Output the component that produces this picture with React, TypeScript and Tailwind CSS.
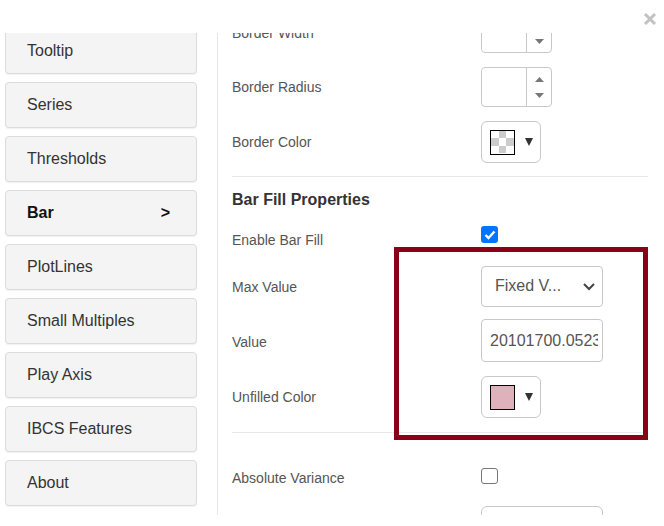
import React from "react";

const navItems = [
  "Tooltip",
  "Series",
  "Thresholds",
  "Bar",
  "PlotLines",
  "Small Multiples",
  "Play Axis",
  "IBCS Features",
  "About",
];

const NavButton = ({ label, active }: { label: string; active?: boolean }) => (
  <div className="flex h-[46px] w-[192px] shrink-0 items-center justify-between rounded-[4px] border border-[#dcdcdc] bg-[#f4f4f4] pl-[21px] pr-[26px] text-[16px] text-[#333] shadow-[0_1px_1px_rgba(0,0,0,0.06)]">
    <span className={active ? "font-bold text-[#111]" : ""}>{label}</span>
    {active && <span className="font-bold text-[#111]">&gt;</span>}
  </div>
);

const Spinner = ({ up = true }: { up?: boolean }) => (
  <div className="flex h-[40px] w-[71px] rounded-[4px] border border-[#c8c8c8] bg-white">
    <div className="flex-1 border-r border-[#c8c8c8]" />
    <div className="flex w-[24px] flex-col items-center justify-center gap-[11px]">
      <svg width="9" height="5" viewBox="0 0 9 5" className={up ? "" : "invisible"}>
        <path d="M0 5 L4.5 0 L9 5 Z" fill="#777" />
      </svg>
      <svg width="9" height="5" viewBox="0 0 9 5">
        <path d="M0 0 L4.5 5 L9 0 Z" fill="#777" />
      </svg>
    </div>
  </div>
);

const ColorPicker = ({ color }: { color?: string }) => (
  <div className="flex h-[42px] w-[60px] items-center rounded-[6px] border border-[#c8c8c8] bg-white pl-[8px]">
    {color ? (
      <div className="h-[25px] w-[25px] border border-black" style={{ background: color }} />
    ) : (
      <div className="grid h-[25px] w-[25px] grid-cols-3 grid-rows-3 border border-black">
        {[0, 1, 0, 1, 0, 1, 0, 1, 0].map((g, i) => (
          <div key={i} className={g ? "bg-[#cccccc]" : "bg-white"} />
        ))}
      </div>
    )}
    <svg width="8" height="8" viewBox="0 0 8 8" className="ml-[10px]">
      <path d="M0 0 L8 0 L4 8 Z" fill="#333" />
    </svg>
  </div>
);

const Row = ({
  label,
  h,
  children,
}: {
  label: string;
  h: string;
  children?: React.ReactNode;
}) => (
  <div className={`flex items-center ${h}`}>
    <div className="w-[249px] text-[14px] text-[#555]">{label}</div>
    {children}
  </div>
);

export default function App() {
  return (
    <div
      className="relative h-[526px] w-[664px] overflow-hidden bg-white"
      style={{ fontFamily: '"Liberation Sans", Arial, sans-serif' }}
    >
      {/* close */}
      <svg width="14" height="14" viewBox="0 0 14 14" className="absolute left-[643px] top-[12px]">
        <path d="M2 2 L12 12 M12 2 L2 12" stroke="#c2c2c2" strokeWidth="3" />
      </svg>

      <div className="mt-[33px] flex h-[482px]">
        {/* left nav */}
        <div className="w-[218px] shrink-0 overflow-hidden border-r border-[#e6e6e6]">
          <div className="-mt-[5px] flex flex-col gap-[8px] pl-[5px]">
            {navItems.map((n) => (
              <NavButton key={n} label={n} active={n === "Bar"} />
            ))}
          </div>
        </div>

        {/* right panel */}
        <div className="relative flex-1 overflow-hidden pl-[14px] pr-[16px]">
          <div className="-mt-[27px] flex flex-col">
            <Row label="Border Width" h="h-[54px]">
              <Spinner up={false} />
            </Row>
            <Row label="Border Radius" h="h-[54px]">
              <Spinner />
            </Row>
            <Row label="Border Color" h="h-[56px]">
              <ColorPicker />
            </Row>
            <div className="mt-[6px] h-px bg-[#e8e8e8]" />
            <div className="flex h-[44px] items-center pt-[2px] text-[16px] font-bold text-[#333]">
              Bar Fill Properties
            </div>
            <div className="flex h-[39px] items-start">
              <div className="mt-[9px] w-[249px] text-[14px] text-[#555]">Enable Bar Fill</div>
              <div className="mt-[5px] flex h-[17px] w-[17px] items-center justify-center rounded-[3px] bg-[#0075ff]">
                <svg width="12" height="10" viewBox="0 0 12 10">
                  <path d="M1.5 5 L4.5 8 L10.5 1.5" stroke="white" strokeWidth="2.4" fill="none" />
                </svg>
              </div>
            </div>
            <Row label="Max Value" h="h-[54px]">
              <div className="-mt-[2px] flex h-[41px] w-[122px] items-center justify-between rounded-[4px] border border-[#c8c8c8] bg-white pl-[13px] pr-[6px] text-[16px] text-[#555]">
                <span>Fixed V...</span>
                <svg width="14" height="9" viewBox="0 0 14 9">
                  <path d="M2 2 L7 7 L12 2" stroke="#444" strokeWidth="2" fill="none" />
                </svg>
              </div>
            </Row>
            <Row label="Value" h="h-[56px]">
              <div className="-mt-[3px] flex h-[43px] w-[122px] items-center rounded-[4px] border border-[#c8c8c8] bg-white pl-[8px] text-[16px] text-[#555]">
                <div className="w-[108px] overflow-hidden whitespace-nowrap">20101700.0523</div>
              </div>
            </Row>
            <Row label="Unfilled Color" h="h-[54px]">
              <ColorPicker color="#dfb1bb" />
            </Row>
            <div className="mt-[8px] h-px bg-[#e8e8e8]" />
            <div className="mt-[16px] flex h-[54px] items-center">
              <div className="mt-[4px] w-[249px] text-[14px] text-[#555]">Absolute Variance</div>
              <div className="h-[16px] w-[17px] rounded-[3px] border border-[#777] bg-white" />
            </div>
            <div className="mt-[3px] flex">
              <div className="w-[249px]" />
              <div className="h-[42px] w-[122px] rounded-[6px] border border-[#c8c8c8] bg-white" />
            </div>
          </div>
        </div>
      </div>

      {/* highlight annotation */}
      <div className="absolute left-[394px] top-[247px] h-[193px] w-[254px] border-[5px] border-[#8a0019]" />
    </div>
  );
}
